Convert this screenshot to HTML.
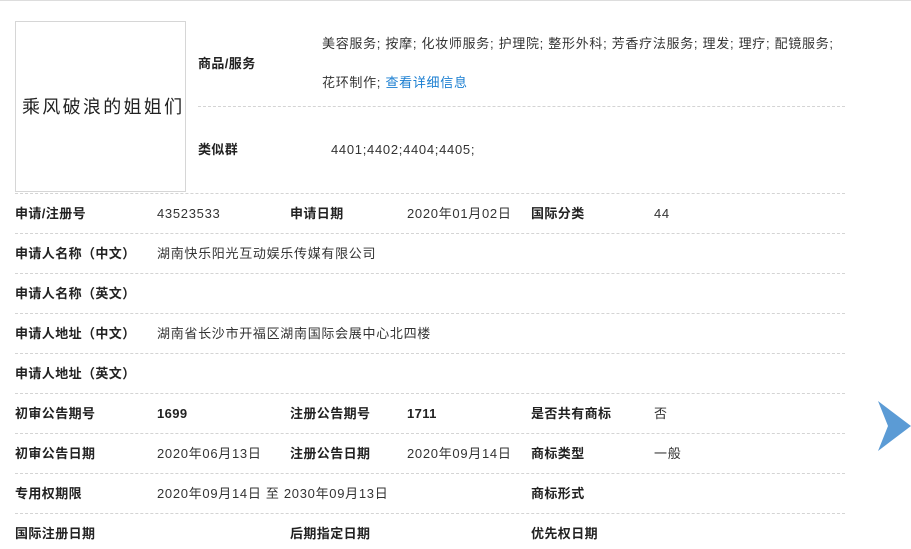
<!DOCTYPE html>
<html><head><meta charset="utf-8"><style>
body{margin:0;width:911px;height:549px;overflow:hidden;background:#fff;font-family:"Liberation Sans","Noto Sans CJK SC",sans-serif;font-size:13px;color:#333;position:relative}
.a{position:absolute;white-space:nowrap;line-height:16px;letter-spacing:0.7px}
.b{font-weight:bold;color:#222;letter-spacing:0.4px}
.l{position:absolute;left:15px;width:830px;border-top:1px dashed #d4d4d4;height:0}
</style></head><body>
<div style="position:absolute;left:0;top:0;width:911px;border-top:1px solid #ddd"></div>
<div style="position:absolute;left:15px;top:21px;width:171px;height:171px;border:1px solid #d6d6d6;box-sizing:border-box"></div>
<div class="a" style="left:22px;top:97px;font-size:18px;line-height:20px;letter-spacing:2.3px;color:#222">乘风破浪的姐姐们</div>
<div class="a b" style="left:198px;top:56px">商品/服务</div>
<div class="a" style="left:322px;top:36px">美容服务; 按摩; 化妆师服务; 护理院; 整形外科; 芳香疗法服务; 理发; 理疗; 配镜服务;</div>
<div class="a" style="left:322px;top:75px">花环制作; <span style="color:#1a7ed1">查看详细信息</span></div>
<div style="position:absolute;left:198px;top:106px;width:647px;border-top:1px dashed #d4d4d4"></div>
<div class="a b" style="left:198px;top:142px">类似群</div>
<div class="a" style="left:331px;top:142px">4401;4402;4404;4405;</div>
<div class="l" style="top:193px"></div>
<div class="l" style="top:233px"></div>
<div class="l" style="top:273px"></div>
<div class="l" style="top:313px"></div>
<div class="l" style="top:353px"></div>
<div class="l" style="top:393px"></div>
<div class="l" style="top:433px"></div>
<div class="l" style="top:473px"></div>
<div class="l" style="top:513px"></div>

<div class="a b" style="left:15px;top:206px">申请/注册号</div>
<div class="a" style="left:157px;top:206px">43523533</div>
<div class="a b" style="left:290px;top:206px">申请日期</div>
<div class="a" style="left:407px;top:206px">2020年01月02日</div>
<div class="a b" style="left:531px;top:206px">国际分类</div>
<div class="a" style="left:654px;top:206px">44</div>

<div class="a b" style="left:15px;top:246px">申请人名称（中文）</div>
<div class="a" style="left:157px;top:246px">湖南快乐阳光互动娱乐传媒有限公司</div>
<div class="a b" style="left:15px;top:286px">申请人名称（英文）</div>
<div class="a b" style="left:15px;top:326px">申请人地址（中文）</div>
<div class="a" style="left:157px;top:326px">湖南省长沙市开福区湖南国际会展中心北四楼</div>
<div class="a b" style="left:15px;top:366px">申请人地址（英文）</div>

<div class="a b" style="left:15px;top:406px">初审公告期号</div>
<div class="a b" style="left:157px;top:406px">1699</div>
<div class="a b" style="left:290px;top:406px">注册公告期号</div>
<div class="a b" style="left:407px;top:406px">1711</div>
<div class="a b" style="left:531px;top:406px">是否共有商标</div>
<div class="a" style="left:654px;top:406px">否</div>

<div class="a b" style="left:15px;top:446px">初审公告日期</div>
<div class="a" style="left:157px;top:446px">2020年06月13日</div>
<div class="a b" style="left:290px;top:446px">注册公告日期</div>
<div class="a" style="left:407px;top:446px">2020年09月14日</div>
<div class="a b" style="left:531px;top:446px">商标类型</div>
<div class="a" style="left:654px;top:446px">一般</div>

<div class="a b" style="left:15px;top:486px">专用权期限</div>
<div class="a" style="left:157px;top:486px">2020年09月14日 至 2030年09月13日</div>
<div class="a b" style="left:531px;top:486px">商标形式</div>

<div class="a b" style="left:15px;top:526px">国际注册日期</div>
<div class="a b" style="left:290px;top:526px">后期指定日期</div>
<div class="a b" style="left:531px;top:526px">优先权日期</div>

<svg style="position:absolute;left:878px;top:401px" width="33" height="50"><polygon points="0,0 33,25 0,50 10,25" fill="#5b9bd5"/></svg>
</body></html>
